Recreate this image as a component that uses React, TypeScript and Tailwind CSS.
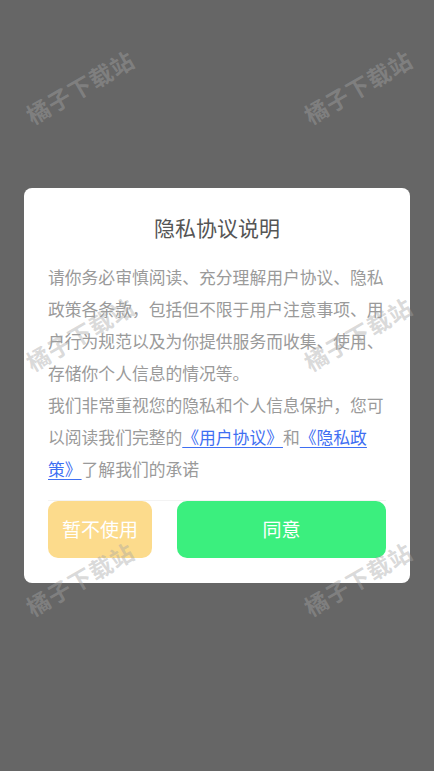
import React from "react";

const marks = [
  { x: 80, y: 87 },
  { x: 358, y: 87 },
  { x: 80, y: 334 },
  { x: 358, y: 334 },
  { x: 80, y: 579 },
  { x: 358, y: 579 },
];

export default function App() {
  return (
    <div
      className="relative w-[434px] h-[771px] bg-[#666666] overflow-hidden flex items-center justify-center"
      style={{ fontFamily: '"Noto Sans CJK SC", "Noto Sans", sans-serif' }}
    >
      <div className="w-[386px] bg-white rounded-lg px-6 pt-6 pb-[25px] flex flex-col">
        <h1 className="text-[21px] leading-[30px] text-[#555555] text-center font-normal">
          隐私协议说明
        </h1>
        <div className="mt-[19px] text-[16.8px] leading-[32px] text-[#9a9a9a]">
          <p>
            请你务必审慎阅读、充分理解用户协议、隐私政策各条款，包括但不限于用户注意事项、用户行为规范以及为你提供服务而收集、使用、存储你个人信息的情况等。
          </p>
          <p>
            我们非常重视您的隐私和个人信息保护，您可以阅读我们完整的
            <a className="text-[#3f6ff2] underline underline-offset-[3px]">《用户协议》</a>
            和
            <a className="text-[#3f6ff2] underline underline-offset-[3px]">《隐私政策》</a>
            了解我们的承诺
          </p>
        </div>
        <div className="mt-[15px] border-t border-[#f3f3f3] flex gap-[25px]">
          <button className="w-[104px] h-[57px] rounded-[10px] bg-[#fcdb8c] text-white text-[19px]">
            暂不使用
          </button>
          <button className="flex-1 h-[57px] rounded-[10px] bg-[#3bef7e] text-white text-[19px]">
            同意
          </button>
        </div>
      </div>
      {marks.map((m, i) => (
        <div
          key={i}
          className="absolute pointer-events-none whitespace-nowrap font-bold text-[23px] leading-none tracking-[1px] text-[rgba(165,165,165,0.42)]"
          style={{
            left: m.x,
            top: m.y,
            transform: "translate(-50%, -50%) rotate(-30deg)",
          }}
        >
          橘子下载站
        </div>
      ))}
    </div>
  );
}
